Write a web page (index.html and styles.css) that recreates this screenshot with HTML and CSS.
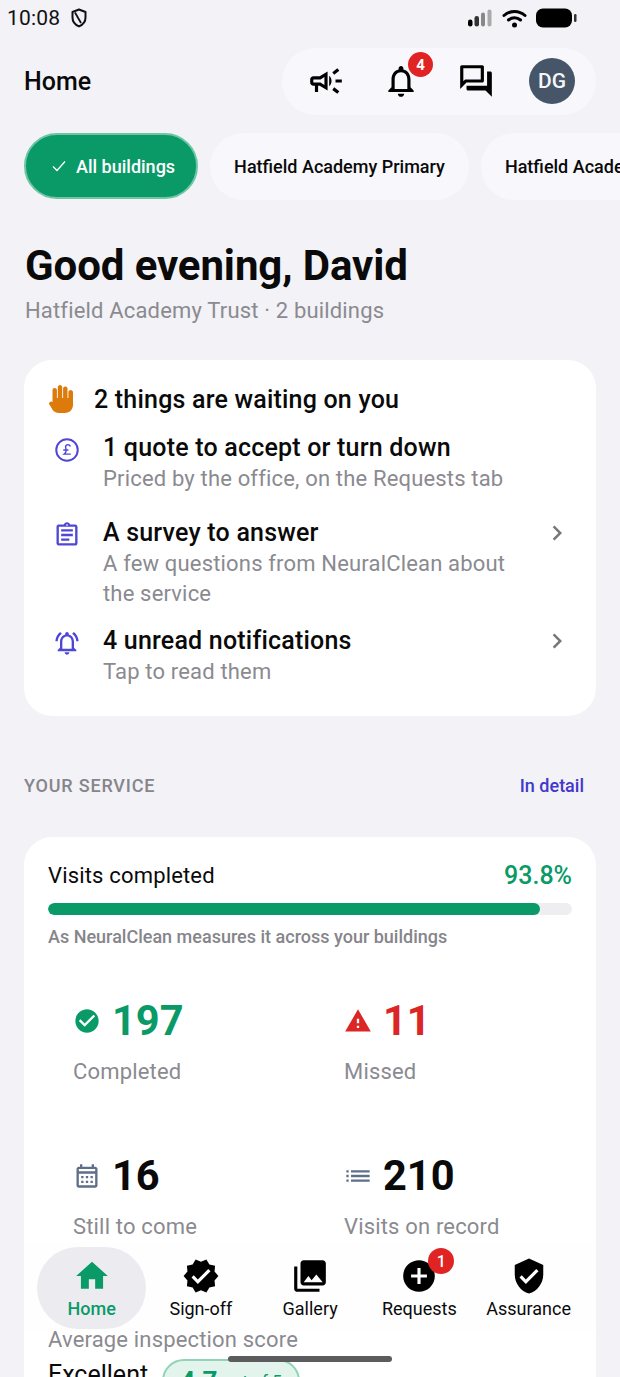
FILE: index.html
```html
<!DOCTYPE html>
<html lang="en">
<head>
<meta charset="utf-8">
<title>Home</title>
<link rel="stylesheet" href="styles.css">
</head>
<body>
<div class="app">
  <div class="status">
    <div class="status-left">
      <span class="clock">10:08</span>
      <svg class="shield-status" viewBox="0 0 18 20"><path d="M9 1.500 2.500 4v5.500c0 4 2.800 7.400 6.500 8.900 3.700-1.500 6.500-4.900 6.500-8.900V4z" fill="none" stroke="#111" stroke-width="2" stroke-linejoin="round"/><path d="M5 4.500 11 15" stroke="#111" stroke-width="1.800" fill="none"/></svg>
    </div>
    <div class="status-right">
      <svg class="signal" viewBox="0 0 26 18"><rect x="1" y="10.500" width="4.500" height="7" rx="2.200" fill="#000"/><rect x="7.500" y="7" width="4.500" height="10.500" rx="2.200" fill="#333"/><rect x="14" y="3.500" width="4" height="14" rx="2" fill="#888"/><rect x="20.500" y="0.500" width="4" height="17" rx="2" fill="#aaa"/></svg>
      <svg class="wifi" viewBox="0 0 24 19"><path d="M1.500 6.500C7.500 1 16.500 1 22.500 6.500M6 11c3.500-3 8.500-3 12 0" fill="none" stroke="#000" stroke-width="3" stroke-linecap="round"/><circle cx="12" cy="16" r="2.500" fill="#000"/></svg>
      <svg class="battery" viewBox="0 0 41 20"><rect x="0" y="0.500" width="36" height="19" rx="7" fill="#000"/><rect x="38" y="6" width="2.500" height="8" rx="1.200" fill="#333"/></svg>
    </div>
  </div>

  <header class="topbar">
    <h1 class="page-title">Home</h1>
    <div class="actions">
      <svg class="ico-top" viewBox="0 0 24 24"><path d="M18 11v2h4v-2h-4zm-2 6.610c.96.71 2.210 1.650 3.200 2.390.4-.53.8-1.070 1.200-1.600-.99-.74-2.240-1.680-3.200-2.400-.4.54-.8 1.080-1.200 1.610zM20.400 5.600c-.4-.53-.8-1.070-1.200-1.600-.99.74-2.240 1.680-3.200 2.400.4.53.8 1.070 1.200 1.600.96-.72 2.210-1.650 3.200-2.400zM4 9c-1.100 0-2 .9-2 2v2c0 1.100.9 2 2 2h1v4h2v-4h1l5 3V6L8 9H4zm5.030 1.710L11 9.530v4.940l-1.970-1.180-.48-.29H4v-2h4.550l.48-.29zM15.500 12c0-1.330-.58-2.530-1.500-3.350v6.690c.92-.81 1.500-2.010 1.500-3.340z"/></svg>
      <span class="icon-wrap">
        <svg class="ico-top" viewBox="0 0 24 24"><path d="M12 22c1.100 0 2-.9 2-2h-4c0 1.100.9 2 2 2zm6-6v-5c0-3.070-1.630-5.640-4.500-6.320V4c0-.83-.67-1.500-1.500-1.500s-1.500.67-1.500 1.500v.68C7.640 5.360 6 7.920 6 11v5l-2 2v1h16v-1l-2-2zm-2 1H8v-6c0-2.480 1.510-4.500 4-4.500s4 2.020 4 4.500v6z"/></svg>
        <span class="badge badge-top">4</span>
      </span>
      <svg class="ico-top" viewBox="0 0 24 24"><path d="M15 4v7H5.170l-.59.59-.58.58V4h11m1-2H3c-.55 0-1 .45-1 1v14l4-4h10c.55 0 1-.45 1-1V3c0-.55-.45-1-1-1zm5 4h-2v9H6v2c0 .55.45 1 1 1h11l4 4V7c0-.55-.45-1-1-1z"/></svg>
      <span class="avatar">DG</span>
    </div>
  </header>

  <div class="chips">
    <span class="chip chip-on"><svg class="chip-check" viewBox="0 0 16 16"><path d="M2 8.500 6 12.500 14 3.500" fill="none" stroke="#fff" stroke-width="1.300"/></svg>All buildings</span>
    <span class="chip">Hatfield Academy Primary</span>
    <span class="chip">Hatfield Academy Secondary</span>
  </div>

  <section class="greeting">
    <h2 class="hello">Good evening, David</h2>
    <p class="trust">Hatfield Academy Trust · 2 buildings</p>
  </section>

  <section class="card waiting">
    <div class="waiting-head">
      <svg class="hand" viewBox="0 0 27 28"><path d="M3.500 17V5c0-1.200.9-2 2.100-2s2.300.8 2.300 2v8h.9V2.200C8.800 1 9.800 0 11 0s2.200 1 2.200 2.200V13h.9V3.600c0-1.200 1-2.100 2.200-2.100s2.200.9 2.200 2.100V13h.9V7.200c0-1.200 1-2.200 2.200-2.200s2.400 1 2.400 2.200V20c0 4.400-3.600 8-8 8h-6c-2.600 0-4.400-.9-6-2.500L.4 19.600c-.6-.7-.5-1.500.1-2l1-.8c.6-.5 1.400-.3 2 .2z"/></svg>
      <span>2 things are waiting on you</span>
    </div>
    <div class="todo todo-first">
      <svg class="todo-ico" viewBox="0 0 24 24"><circle cx="12" cy="12" r="9.200" fill="none" stroke-width="1.700"/><path class="pound" d="M14.800 9c-.4-1.300-1.700-1.800-2.800-1.400-1.100.4-1.400 1.500-1.100 2.600.3 1.100.6 2.100.2 3.300-.3.9-.8 1.500-1.500 2h5.600M8.800 12h4.400" fill="none" stroke-width="1.200"/></svg>
      <div class="todo-text">
        <div class="todo-title">1 quote to accept or turn down</div>
        <div class="todo-sub">Priced by the office, on the Requests tab</div>
      </div>
    </div>
    <div class="todo todo-second">
      <svg class="todo-ico" viewBox="0 0 24 24"><path class="fill" d="M7 15h7v2H7zm0-4h10v2H7zm0-4h10v2H7zm12-4h-4.180C14.400 1.840 13.300 1 12 1c-1.300 0-2.400.84-2.820 2H5c-.14 0-.27.01-.4.04-.39.08-.74.28-1.010.55-.18.18-.33.4-.43.64-.1.23-.16.49-.16.77v14c0 .27.06.54.16.78s.25.45.43.64c.27.27.62.47 1.010.55.13.02.26.03.4.03h14c1.100 0 2-.9 2-2V5c0-1.100-.9-2-2-2zm-7-.25c.41 0 .75.34.75.75s-.34.75-.75.75-.75-.34-.75-.75.34-.75.75-.75zM19 19H5V5h14v14z"/></svg>
      <div class="todo-text">
        <div class="todo-title">A survey to answer</div>
        <div class="todo-sub">A few questions from NeuralClean about the service</div>
      </div>
      <svg class="chev" viewBox="0 0 24 24"><path d="M10 6 8.590 7.410 13.170 12l-4.580 4.590L10 18l6-6z"/></svg>
    </div>
    <div class="todo">
      <svg class="todo-ico" viewBox="0 0 24 24"><path class="fill" d="M7.580 4.080 6.150 2.650C3.750 4.480 2.170 7.300 2.030 10.500h2c.15-2.650 1.510-4.970 3.550-6.420zm12.390 6.420h2c-.15-3.200-1.730-6.020-4.120-7.850l-1.420 1.430c2.020 1.450 3.390 3.770 3.540 6.420zM18 11c0-3.070-1.640-5.640-4.500-6.320V4c0-.83-.67-1.500-1.500-1.500s-1.500.67-1.500 1.500v.68C7.630 5.360 6 7.920 6 11v5l-2 2v1h16v-1l-2-2v-5zm-2 6H8v-6c0-2.480 1.510-4.500 4-4.500s4 2.020 4 4.500v6zm-4 5c.14 0 .27-.01.4-.04.65-.14 1.180-.58 1.440-1.180.1-.24.15-.5.15-.78h-4c.01 1.100.9 2 2.010 2z"/></svg>
      <div class="todo-text">
        <div class="todo-title">4 unread notifications</div>
        <div class="todo-sub">Tap to read them</div>
      </div>
      <svg class="chev" viewBox="0 0 24 24"><path d="M10 6 8.590 7.410 13.170 12l-4.580 4.590L10 18l6-6z"/></svg>
    </div>
  </section>

  <div class="section-head">
    <span class="section-label">YOUR SERVICE</span>
    <span class="section-link">In detail</span>
  </div>

  <section class="card service">
    <div class="rate-row">
      <span class="rate-label">Visits completed</span>
      <span class="rate-value">93.8%</span>
    </div>
    <div class="track"><div class="bar" style="width:93.8%"></div></div>
    <p class="rate-note">As NeuralClean measures it across your buildings</p>
    <div class="stats">
      <div class="stat">
        <div class="stat-top">
          <svg class="stat-ico green" viewBox="0 0 24 24"><path d="M12 2C6.480 2 2 6.480 2 12s4.480 10 10 10 10-4.480 10-10S17.520 2 12 2zm-2 15-5-5 1.410-1.410L10 14.170l7.590-7.590L19 8l-9 9z"/></svg>
          <span class="stat-num green-t">197</span>
        </div>
        <div class="stat-label">Completed</div>
      </div>
      <div class="stat">
        <div class="stat-top">
          <svg class="stat-ico red" viewBox="0 0 24 24"><path d="M1 21h22L12 2 1 21zm12-3h-2v-2h2v2zm0-4h-2v-4h2v4z"/></svg>
          <span class="stat-num red-t">11</span>
        </div>
        <div class="stat-label">Missed</div>
      </div>
      <div class="stat">
        <div class="stat-top">
          <svg class="stat-ico slate" viewBox="0 0 24 24"><path d="M19 4h-1V2h-2v2H8V2H6v2H5c-1.110 0-1.990.9-1.990 2L3 20c0 1.100.89 2 2 2h14c1.100 0 2-.9 2-2V6c0-1.100-.9-2-2-2zm0 16H5V10h14v10zm0-12H5V6h14v2zM9 14H7v-2h2v2zm4 0h-2v-2h2v2zm4 0h-2v-2h2v2zm-8 4H7v-2h2v2zm4 0h-2v-2h2v2zm4 0h-2v-2h2v2z"/></svg>
          <span class="stat-num">16</span>
        </div>
        <div class="stat-label">Still to come</div>
      </div>
      <div class="stat">
        <div class="stat-top">
          <svg class="stat-ico slate" viewBox="0 0 24 24"><path d="M2 13h2v-2H2v2zm0 4h2v-2H2v2zm0-8h2V7H2v2zm4 4h16v-2H6v2zm0 4h16v-2H6v2zM6 7v2h16V7H6z"/></svg>
          <span class="stat-num">210</span>
        </div>
        <div class="stat-label">Visits on record</div>
      </div>
    </div>
    <div class="score-label">Average inspection score</div>
    <div class="score-row">
      <span class="score-word">Excellent</span>
      <span class="score-pill"><b>4.7</b> out of 5</span>
    </div>
  </section>

  <nav class="tabbar">
    <div class="tab tab-on">
      <svg class="tab-ico" viewBox="0 0 24 24"><path d="M10 20v-6h4v6h5v-8h3L12 3 2 12h3v8z"/></svg>
      <span>Home</span>
    </div>
    <div class="tab">
      <svg class="tab-ico" viewBox="0 0 24 24"><path d="M23 12l-2.440-2.780.34-3.680-3.610-.82-1.890-3.180L12 3 8.600 1.540 6.710 4.720l-3.610.81.34 3.680L1 12l2.440 2.780-.34 3.690 3.610.82 1.890 3.180L12 21l3.400 1.460 1.890-3.180 3.610-.82-.34-3.680L23 12zm-13 5-4-4 1.410-1.410L10 14.170l6.590-6.590L18 9l-8 8z"/></svg>
      <span>Sign-off</span>
    </div>
    <div class="tab">
      <svg class="tab-ico" viewBox="0 0 24 24"><path d="M22 16V4c0-1.100-.9-2-2-2H8c-1.100 0-2 .9-2 2v12c0 1.100.9 2 2 2h12c1.100 0 2-.9 2-2zm-11-4 2.030 2.710L16 11l4 5H8l3-4zM2 6v14c0 1.100.9 2 2 2h14v-2H4V6H2z"/></svg>
      <span>Gallery</span>
    </div>
    <div class="tab">
      <span class="icon-wrap">
        <svg class="tab-ico" viewBox="0 0 24 24"><path d="M12 2C6.480 2 2 6.480 2 12s4.480 10 10 10 10-4.480 10-10S17.520 2 12 2zm5 11h-4v4h-2v-4H7v-2h4V7h2v4h4v2z"/></svg>
        <span class="badge badge-nav">1</span>
      </span>
      <span>Requests</span>
    </div>
    <div class="tab">
      <svg class="tab-ico" viewBox="0 0 24 24"><path d="M12 1 3 5v6c0 5.550 3.840 10.740 9 12 5.160-1.260 9-6.450 9-12V5l-9-4zm-2 16-4-4 1.410-1.410L10 14.170l6.590-6.590L18 9l-8 8z"/></svg>
      <span>Assurance</span>
    </div>
  </nav>
  <div class="home-pill"></div>
</div>
</body>
</html>
```

FILE: styles.css
```css
* { box-sizing: border-box; }
html, body { margin: 0; padding: 0; }
body { font-family: Roboto, "Liberation Sans", sans-serif; background: #f2f2f7; color: #0a0a0a; }
h1, h2, p { margin: 0; }
svg { display: block; flex: none; }

.app { position: relative; width: 620px; height: 1377px; overflow: hidden; background: #f2f2f7; }

.status { height: 36px; padding: 0 43px 0 7px; display: flex; justify-content: space-between; align-items: center; }
.status-left { display: flex; align-items: center; gap: 10px; }
.clock { font-size: 21px; color: #111; letter-spacing: .2px; }
.shield-status { width: 18px; height: 20px; }
.status-right { display: flex; align-items: center; gap: 9px; }
.signal { width: 26px; height: 18px; }
.wifi { width: 25px; height: 19px; }
.battery { width: 41px; height: 20px; }

.topbar { height: 68px; margin-top: 11px; padding: 0 24px; display: flex; align-items: center; justify-content: space-between; }
.page-title { font-size: 25px; font-weight: 500; }
.actions { width: 314px; height: 67px; border-radius: 34px; background: #f8f8fc; display: flex; align-items: center; gap: 37px; padding: 0 0 0 25px; }
.ico-top { width: 38px; height: 38px; fill: #000; }
.icon-wrap { position: relative; display: block; }
.badge { position: absolute; background: #e02424; color: #fff; border-radius: 50%; display: flex; align-items: center; justify-content: center; font-weight: 700; }
.badge-top { width: 25px; height: 25px; font-size: 15px; top: -10px; right: -13px; }
.badge-nav { width: 26px; height: 26px; font-size: 16px; font-weight: 500; top: -9px; right: -16px; }
.avatar { width: 46px; height: 46px; margin-left: -3px; border-radius: 50%; background: #475569; color: #f4f6f8; font-size: 21px; font-weight: 500; display: flex; align-items: center; justify-content: center; }

.chips { display: flex; gap: 12px; padding-left: 24px; margin-top: 18px; width: 900px; }
.chip { height: 67px; padding: 0 24px; border-radius: 34px; background: #f8f8fc; font-size: 18px; font-weight: 500; display: flex; align-items: center; white-space: nowrap; }
.chip-on { background: #0a9a68; color: #fff; border: 2px solid #6fc6a6; height: 66px; padding: 0 21px 0 25px; }
.chip-check { width: 16px; height: 16px; margin-right: 9px; }

.greeting { padding: 0 25px; margin-top: 41px; }
.hello { font-size: 42px; line-height: 50px; font-weight: 700; letter-spacing: -.1px; }
.trust { font-size: 22px; line-height: 30px; color: #8a8a90; margin-top: 5px; letter-spacing: .17px; }

.card { background: #fff; border-radius: 28px; margin: 0 24px; }
.waiting { margin-top: 34px; height: 356px; padding: 20px 24px; }
.waiting-head { display: flex; align-items: center; gap: 18px; font-size: 25px; font-weight: 500; height: 38px; letter-spacing: .2px; }
.hand { width: 27px; height: 28px; margin-left: 1px; fill: #dd7a0c; }
.todo { display: flex; align-items: flex-start; margin-top: 16px; }
.todo-first { margin-top: 14px; }
.todo-second { margin-top: 23px; }
.todo-ico { width: 28px; height: 28px; margin: 4px 22.500px 0 4.500px; stroke: #4f46d8; fill: none; }
.todo-ico .fill { fill: #4f46d8; stroke: none; }
.todo-text { flex: 1; padding-right: 10px; }
.todo-title { font-size: 25px; line-height: 32px; font-weight: 500; letter-spacing: .2px; }
.todo-sub { font-size: 22px; line-height: 30px; color: #8a8a90; letter-spacing: .17px; }
.chev { width: 30px; height: 30px; fill: #777; margin-top: 1px; }

.section-head { margin: 54px 36px 0 24px; display: flex; justify-content: space-between; align-items: center; height: 30px; }
.section-label { font-size: 18px; font-weight: 500; letter-spacing: .8px; color: #85858b; }
.section-link { font-size: 18px; font-weight: 500; color: #4338ca; }

.service { margin-top: 37px; padding: 19px 24px; height: 620px; }
.rate-row { display: flex; justify-content: space-between; align-items: center; height: 38px; }
.rate-label { font-size: 22px; letter-spacing: .17px; }
.rate-value { font-size: 25px; font-weight: 500; color: #0a9a68; }
.track { height: 12px; margin-top: 9px; background: #eeeef0; border-radius: 6px; overflow: hidden; }
.bar { height: 100%; background: #0a9a68; border-radius: 6px; }
.rate-note { font-size: 18px; font-weight: 500; color: #85858b; margin-top: 10px; line-height: 24px; }

.stats { display: grid; grid-template-columns: 271px 1fr; row-gap: 64px; padding-left: 25px; margin-top: 47px; }
.stat-top { display: flex; align-items: center; height: 50px; }
.stat-ico { width: 28px; height: 28px; margin-right: 11px; }
.green { fill: #0a9a68; }
.red { fill: #dc2626; }
.slate { fill: #5f6f8a; }
.stat-num { font-size: 41.600px; font-weight: 700; line-height: 50px; }
.green-t { color: #0a9a68; }
.red-t { color: #dc2626; }
.stat-label { font-size: 22px; line-height: 30px; color: #8a8a90; margin-top: 11px; letter-spacing: .17px; }

.score-label { font-size: 22px; line-height: 30px; color: #8a8a90; margin-top: 83px; letter-spacing: .17px; }
.score-row { display: flex; align-items: flex-start; gap: 14px; margin-top: 4px; }
.score-word { font-size: 25px; line-height: 32px; font-weight: 400; }
.score-pill { height: 44px; padding: 0 16px; border-radius: 22px; background: #e2f4ec; border: 2px solid #8fd3b8; color: #0a9a68; font-size: 17px; display: flex; align-items: center; gap: 6px; }
.score-pill b { font-size: 26px; font-weight: 700; }

.tabbar { position: absolute; left: 24px; right: 24px; top: 1243px; height: 87px; background: rgba(254,254,255,.95); display: flex; padding: 4px 0 0 13px; }
.tab { width: 109.250px; height: 82px; display: flex; flex-direction: column; align-items: center; padding-top: 10px; font-size: 18px; gap: 3px; border-radius: 41px; }
.tab-on { background: #ececf0; color: #0a9a68; font-weight: 500; }
.tab-ico { width: 38px; height: 38px; fill: #000; }
.tab-on .tab-ico { fill: #0a9a68; }
.home-pill { position: absolute; left: 228px; top: 1356px; width: 164px; height: 6px; border-radius: 3px; background: #5c5c5e; }
```
